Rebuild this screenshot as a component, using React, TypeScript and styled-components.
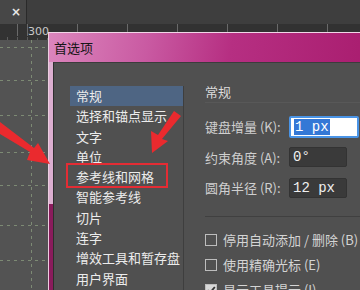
import React from 'react';
import styled, { createGlobalStyle } from 'styled-components';

const Global = createGlobalStyle`
  html, body { margin: 0; padding: 0; background: #535353; }
  body { font-family: "Noto Sans CJK SC", "Noto Sans", sans-serif; }
`;

const Screen = styled.div`
  position: relative;
  width: 360px;
  height: 290px;
  overflow: hidden;
  display: flex;
  flex-direction: column;
  background: #535353;
`;

const TopBar = styled.div`
  height: 24px;
  display: flex;
  background: #3e3e3e;
`;

const Tab = styled.div`
  width: 27px;
  border-right: 1px solid #2a2a2a;
  background: #474747;
  color: #e8e8e8;
  font: bold 12px "DejaVu Sans", sans-serif;
  display: flex;
  align-items: center;
  justify-content: flex-end;
  padding-right: 5px;
  box-sizing: border-box;
`;

const Ruler = styled.div`
  position: relative;
  height: 16px;
  background-color: #323232;
  background-image:
    repeating-linear-gradient(90deg, #6a6a6a 0 1px, transparent 1px 50px),
    repeating-linear-gradient(90deg, #5c5c5c 0 1px, transparent 1px 10px);
  background-size: 100% 12px, 100% 3px;
  background-position: 27px 0, 27px 13px;
  background-repeat: repeat-x;
`;

const RulerLabel = styled.span`
  position: absolute;
  left: 28px;
  top: 2px;
  font: 11px "DejaVu Sans", sans-serif;
  color: #c8c8c8;
  background: #323232;
  line-height: 12px;
`;

const Canvas = styled.div`
  flex: 1;
  background: #535353;
  overflow: hidden;
`;

const Dialog = styled.div`
  position: absolute;
  left: 48px;
  top: 32px;
  width: 330px;
  height: 280px;
  display: flex;
  flex-direction: column;
  border-top: 1px solid #f2d6e8;
  border-left: 1px solid #eccde0;
`;

const TitleBar = styled.div`
  height: 29px;
  display: flex;
  align-items: center;
  padding-left: 5px;
  font-size: 13px;
  color: #161616;
  background: linear-gradient(100deg, #dc86bd 0%, #c95aa2 30%, #b62f82 55%, #a81c6e 100%);
`;

const Body = styled.div`
  flex: 1;
  display: flex;
`;

const SideFrame = styled.div`
  width: 4px;
  background: linear-gradient(180deg, #dcaed0 0 142px, #8a1b5c 142px);
`;

const Inner = styled.div`
  flex: 1;
  display: flex;
  background: #505050;
  border-left: 1px solid #2e2e2e;
  border-top: 1px solid #3c3c3c;
  padding: 23px 0 0 16px;
`;

const List = styled.ul`
  margin: 0;
  padding: 0;
  list-style: none;
  width: 113px;
  border-right: 1px solid #3e3e3e;
  align-self: stretch;
`;

const Item = styled.li<{ $active?: boolean }>`
  height: 20.3px;
  line-height: 20px;
  padding-left: 6px;
  font-size: 13px;
  color: #ececec;
  white-space: nowrap;
  background: ${(p) => (p.$active ? '#4e6583' : 'transparent')};
`;

const RightPane = styled.div`
  flex: 1;
  padding-left: 21px;
  display: flex;
  flex-direction: column;
`;

const Heading = styled.div`
  margin-top: -2px;
  height: 16px;
  line-height: 16px;
  font-size: 13px;
  color: #dcdcdc;
  padding-bottom: 2px;
  border-bottom: 1px solid #585858;
  margin-bottom: 13px;
`;

const Field = styled.div`
  display: flex;
  align-items: center;
  height: 21px;
  margin-bottom: 9.5px;
`;

const Label = styled.span`
  width: 84px;
  font-size: 13px;
  color: #cfcfcf;
  white-space: nowrap;
`;

const Input = styled.div<{ $focused?: boolean; $w: number }>`
  box-sizing: border-box;
  width: ${(p) => p.$w}px;
  height: ${(p) => (p.$focused ? 22 : 20)}px;
  padding-left: 3px;
  display: flex;
  align-items: center;
  font: 14px "Liberation Mono", monospace;
  color: #f0f0f0;
  background: ${(p) => (p.$focused ? '#ffffff' : '#3a3a3a')};
  border: ${(p) => (p.$focused ? '2px solid #4a94e6' : '1px solid #333')};
  border-radius: 2px;
`;

const Selected = styled.span`
  background: #3478d6;
  color: #ffffff;
  padding: 0 1px;
`;

const Separator = styled.div`
  height: 1px;
  background: #404040;
  margin: 8px 0 14px;
`;

const Check = styled.div`
  display: flex;
  align-items: center;
  gap: 6px;
  height: 18px;
  margin-bottom: 7px;
  font-size: 13px;
  color: #d4d4d4;
  white-space: nowrap;
`;

const Box = styled.span<{ $on?: boolean }>`
  box-sizing: border-box;
  width: 12px;
  height: 12px;
  border: 1px solid #bdbdbd;
  background: ${(p) => (p.$on ? '#d8d8d8' : 'transparent')};
  display: flex;
  align-items: center;
  justify-content: center;
`;

const Highlight = styled.div`
  position: absolute;
  left: 66px;
  top: 163px;
  width: 102px;
  height: 25px;
  box-sizing: border-box;
  border: 2px solid #e42c34;
`;

const Arrows = styled.svg`
  position: absolute;
  left: 0;
  top: 0;
  pointer-events: none;
`;

const items = ['常规', '选择和锚点显示', '文字', '单位', '参考线和网格', '智能参考线', '切片', '连字', '增效工具和暂存盘', '用户界面'];

const guideRows = [7, 40, 75, 112, 145, 185, 220];

export default function App() {
  return (
    <>
      <Global />
      <Screen>
        <TopBar>
          <Tab>×</Tab>
        </TopBar>
        <Ruler>
          <RulerLabel>300</RulerLabel>
        </Ruler>
        <Canvas>
          <svg width="360" height="250" viewBox="0 0 360 250">
            <g stroke="#7d8a74" strokeWidth="1" strokeDasharray="3 4">
              <line x1="31.5" y1="0" x2="31.5" y2="250" />
              {guideRows.map((y) => (
                <line key={y} x1="0" y1={y + 0.5} x2="48" y2={y + 0.5} />
              ))}
            </g>
          </svg>
        </Canvas>
        <Dialog>
          <TitleBar>首选项</TitleBar>
          <Body>
            <SideFrame />
            <Inner>
              <List>
                {items.map((t, i) => (
                  <Item key={t} $active={i === 0}>{t}</Item>
                ))}
              </List>
              <RightPane>
                <Heading>常规</Heading>
                <Field>
                  <Label>键盘增量 (K):</Label>
                  <Input $focused $w={70}><Selected>1 px</Selected></Input>
                </Field>
                <Field>
                  <Label>约束角度 (A):</Label>
                  <Input $w={58}>0°</Input>
                </Field>
                <Field>
                  <Label>圆角半径 (R):</Label>
                  <Input $w={58}>12 px</Input>
                </Field>
                <Separator />
                <Check><Box />停用自动添加 / 删除 (B)</Check>
                <Check><Box />使用精确光标 (E)</Check>
                <Check>
                  <Box $on>
                    <svg width="10" height="10" viewBox="0 0 10 10">
                      <path d="M1.5 5.2 L4 7.8 L8.8 2" stroke="#333" strokeWidth="1.8" fill="none" />
                    </svg>
                  </Box>
                  显示工具提示 (I)
                </Check>
              </RightPane>
            </Inner>
          </Body>
        </Dialog>
        <Highlight />
        <Arrows width="360" height="290" viewBox="0 0 360 290">
          <polygon points="0,122 0,134 30,152 27,160 50,164 38,143 34,148" fill="#ea2a2e" />
          <polygon points="181,116 174,111 158,135 151,131 152,153 168,141 162,139" fill="#ea2a2e" />
        </Arrows>
      </Screen>
    </>
  );
}
